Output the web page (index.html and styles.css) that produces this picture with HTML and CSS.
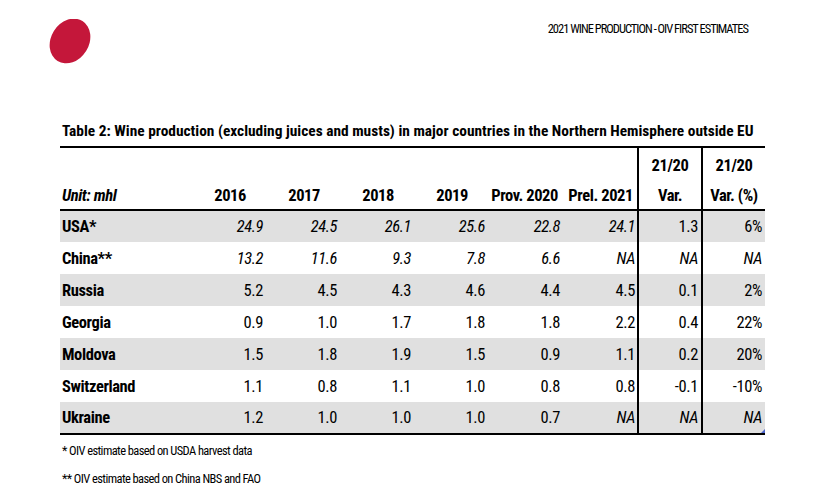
FILE: index.html
```html
<!DOCTYPE html>
<html lang="en">
<head>
<meta charset="utf-8">
<title>2021 Wine Production - OIV First Estimates</title>
<link rel="stylesheet" href="styles.css">
</head>
<body>
<div class="page">
  <header class="top">
    <svg class="logo" width="44" height="46" viewBox="0 0 44 46" aria-hidden="true">
      <ellipse cx="21" cy="22" rx="23.5" ry="19" transform="rotate(-58 21 22)" fill="#c4173a"/>
    </svg>
    <div class="doc-title">2021 WINE PRODUCTION - OIV FIRST ESTIMATES</div>
  </header>

  <h1 class="table-title">Table 2: Wine production (excluding juices and musts) in major countries in the Northern Hemisphere outside EU</h1>

  <div class="table-wrap">
    <table class="data">
      <colgroup>
        <col class="c-name"><col class="c-y1"><col class="c-y"><col class="c-y"><col class="c-y"><col class="c-y1"><col class="c-y2"><col class="c-var"><col class="c-pct">
      </colgroup>
      <thead>
        <tr class="h1">
          <th></th><th></th><th></th><th></th><th></th><th></th><th></th>
          <th class="vl center">21/20</th><th class="vl center">21/20</th>
        </tr>
        <tr class="h2">
          <th class="unit">Unit: mhl</th>
          <th class="yr">2016</th><th class="yr">2017</th><th class="yr">2018</th><th class="yr">2019</th>
          <th class="yr2">Prov. 2020</th><th class="yr2">Prel. 2021</th>
          <th class="vl center">Var.</th><th class="vl center">Var. (%)</th>
        </tr>
      </thead>
      <tbody>
        <tr class="shade it">
          <th>USA*</th><td>24.9</td><td>24.5</td><td>26.1</td><td>25.6</td><td>22.8</td><td>24.1</td><td class="vl up">1.3</td><td class="vl up">6%</td>
        </tr>
        <tr class="it">
          <th>China**</th><td>13.2</td><td>11.6</td><td>9.3</td><td>7.8</td><td>6.6</td><td>NA</td><td class="vl">NA</td><td class="vl">NA</td>
        </tr>
        <tr class="shade">
          <th>Russia</th><td>5.2</td><td>4.5</td><td>4.3</td><td>4.6</td><td>4.4</td><td>4.5</td><td class="vl">0.1</td><td class="vl">2%</td>
        </tr>
        <tr>
          <th>Georgia</th><td>0.9</td><td>1.0</td><td>1.7</td><td>1.8</td><td>1.8</td><td>2.2</td><td class="vl">0.4</td><td class="vl">22%</td>
        </tr>
        <tr class="shade">
          <th>Moldova</th><td>1.5</td><td>1.8</td><td>1.9</td><td>1.5</td><td>0.9</td><td>1.1</td><td class="vl">0.2</td><td class="vl">20%</td>
        </tr>
        <tr>
          <th>Switzerland</th><td>1.1</td><td>0.8</td><td>1.1</td><td>1.0</td><td>0.8</td><td>0.8</td><td class="vl">-0.1</td><td class="vl">-10%</td>
        </tr>
        <tr class="shade last">
          <th>Ukraine</th><td>1.2</td><td>1.0</td><td>1.0</td><td>1.0</td><td>0.7</td><td class="na">NA</td><td class="vl na">NA</td><td class="vl na handle">NA</td>
        </tr>
      </tbody>
    </table>
  </div>

  <div class="notes">
    <p>* OIV estimate based on USDA harvest data</p>
    <p>** OIV estimate based on China NBS and FAO</p>
  </div>
</div>
</body>
</html>
```

FILE: styles.css
```css
* { box-sizing: border-box; }

html, body {
  margin: 0;
  padding: 0;
  background: #ffffff;
}

body {
  width: 827px;
  height: 489px;
  overflow: hidden;
  color: #000000;
  font-family: "Liberation Sans Narrow", "Roboto Condensed", "DejaVu Sans Condensed", "Liberation Sans", sans-serif;
  font-stretch: condensed;
}

.page {
  display: flex;
  flex-direction: column;
}

.top {
  display: flex;
  justify-content: space-between;
  align-items: flex-start;
  height: 121px;
  padding: 19px 79px 0 49px;
}

.logo {
  display: block;
}

.doc-title {
  margin-top: 3px;
  font-size: 12.5px;
  line-height: 14px;
  letter-spacing: -1px;
}

.table-title {
  margin: 0 0 0 62px;
  height: 25px;
  font-size: 15.4px;
  line-height: 20px;
  font-weight: bold;
  white-space: nowrap;
  letter-spacing: 0;
}

.table-wrap {
  padding-left: 60px;
  position: relative;
}

.data {
  border-collapse: collapse;
  table-layout: fixed;
  width: 705px;
  font-size: 16.5px;
  letter-spacing: -0.4px;
  border-top: 2px solid #000;
  border-bottom: 2px solid #000;
}

.c-name { width: 130px; }
.c-y1 { width: 75px; }
.c-y { width: 74px; }
.c-y2 { width: 76px; }
.c-var { width: 64px; }
.c-pct { width: 63px; }

.data th,
.data td {
  padding: 0 2px 0 0;
  white-space: nowrap;
  text-align: right;
  font-weight: normal;
}

.data thead th {
  font-weight: bold;
}

.h1 th { height: 33px; padding-top: 2px; }
.h2 th { height: 30px; padding-top: 2px; }

.h2 th { border-bottom: 2px solid #000; }

.data .unit {
  text-align: left;
  font-style: italic;
  padding-left: 2px;
}

.data .yr { padding-right: 19px; }
.data .yr2 { padding-right: 4px; }
.data .center { text-align: center; padding-right: 0; }

.data tbody tr { height: 32px; }

.data tbody th {
  text-align: left;
  font-weight: bold;
  padding-left: 2px;
}

.data tbody td.vl { padding-right: 3px; }

.vl { border-left: 2px solid #000; }

.shade { background: #e0e0e0; }

.it td,
.na { font-style: italic; }

.it td.up { font-style: normal; }

.handle { position: relative; }

.handle::after {
  content: "";
  position: absolute;
  right: 0;
  bottom: 0;
  width: 0;
  height: 0;
  border-left: 4px solid transparent;
  border-bottom: 4px solid #4a62c8;
}

.notes {
  padding: 8px 0 0 62px;
  font-size: 12.5px;
  letter-spacing: -0.6px;
}

.notes p {
  margin: 0 0 13px 0;
  line-height: 15px;
}
```
